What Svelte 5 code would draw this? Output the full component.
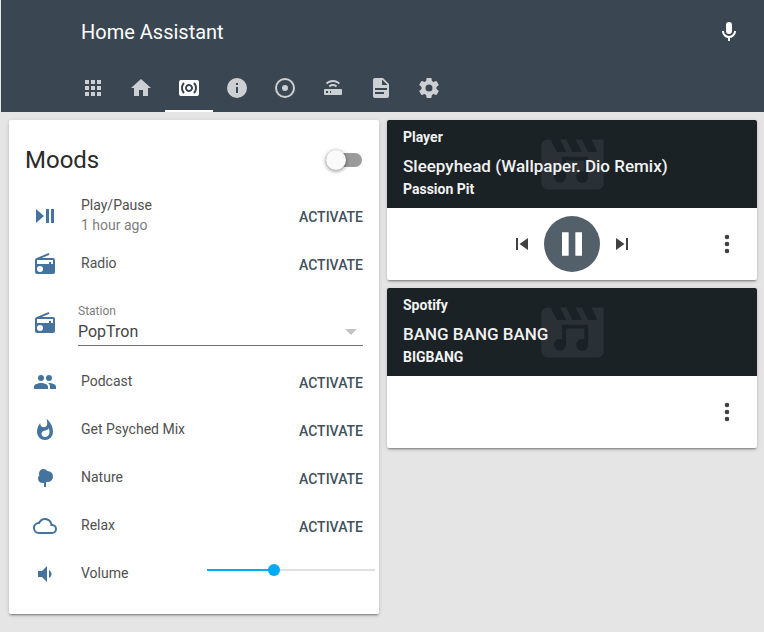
<script lang="ts">
	const icons = {
		apps: 'M4,8H8V4H4V8M10,20H14V16H10V20M4,20H8V16H4V20M4,14H8V10H4V14M10,14H14V10H10V14M16,4V8H20V4H16M10,8H14V4H10V8M16,14H20V10H16V14M16,20H20V16H16V20Z',
		home: 'M10,20V14H14V20H19V12H22L12,3L2,12H5V20H10Z',
		surround:
			'M20 4H4a2 2 0 0 0-2 2v12a2 2 0 0 0 2 2h16a2 2 0 0 0 2-2V6a2 2 0 0 0-2-2zM7.76 16.24l-1.41 1.41C4.78 16.1 4 14.05 4 12s.78-4.1 2.34-5.66l1.41 1.41C6.59 8.93 6 10.46 6 12s.59 3.07 1.76 4.24zM12 16c-2.21 0-4-1.79-4-4s1.79-4 4-4 4 1.79 4 4-1.79 4-4 4zm5.66 1.66l-1.41-1.41C17.41 15.07 18 13.54 18 12s-.59-3.07-1.76-4.24l1.41-1.41C19.22 7.9 20 9.95 20 12s-.78 4.1-2.34 5.66zM12 10c-1.1 0-2 .9-2 2s.9 2 2 2 2-.9 2-2-.9-2-2-2z',
		info: 'M13,9H11V7H13M13,17H11V11H13M12,2A10,10 0 0,0 2,12A10,10 0 0,0 12,22A10,10 0 0,0 22,12A10,10 0 0,0 12,2Z',
		record:
			'M12,20A8,8 0 0,1 4,12A8,8 0 0,1 12,4A8,8 0 0,1 20,12A8,8 0 0,1 12,20M12,2A10,10 0 0,0 2,12A10,10 0 0,0 12,22A10,10 0 0,0 22,12A10,10 0 0,0 12,2M12,9A3,3 0 0,0 9,12A3,3 0 0,0 12,15A3,3 0 0,0 15,12A3,3 0 0,0 12,9Z',
		router:
			'M4,13H20A1,1 0 0,1 21,14V18A1,1 0 0,1 20,19H4A1,1 0 0,1 3,18V14A1,1 0 0,1 4,13M9,17H10V15H9V17M5,15V17H7V15H5M19,6.93L17.6,8.34C16.15,6.89 14.15,6 11.93,6C9.7,6 7.7,6.89 6.25,8.34L4.84,6.93C6.66,5.12 9.17,4 11.93,4C14.69,4 17.2,5.12 19,6.93M16.2,9.76L14.77,11.17C14.05,10.45 13.05,10 11.93,10C10.81,10 9.8,10.45 9.08,11.17L7.67,9.76C8.75,8.67 10.25,8 11.93,8C13.6,8 15.11,8.67 16.2,9.76Z',
		file: 'M13,9H18.5L13,3.5V9M6,2H14L20,8V20A2,2 0 0,1 18,22H6C4.89,22 4,21.1 4,20V4C4,2.89 4.89,2 6,2M15,18V16H6V18H15M18,14V12H6V14H18Z',
		settings:
			'M12,15.5A3.5,3.5 0 0,1 8.5,12A3.5,3.5 0 0,1 12,8.5A3.5,3.5 0 0,1 15.5,12A3.5,3.5 0 0,1 12,15.5M19.43,12.97C19.47,12.65 19.5,12.33 19.5,12C19.5,11.67 19.47,11.34 19.43,11L21.54,9.37C21.73,9.22 21.78,8.95 21.66,8.73L19.66,5.27C19.54,5.05 19.27,4.96 19.05,5.05L16.56,6.05C16.04,5.66 15.5,5.32 14.87,5.07L14.5,2.42C14.46,2.18 14.25,2 14,2H10C9.75,2 9.54,2.18 9.5,2.42L9.13,5.07C8.5,5.32 7.96,5.66 7.44,6.05L4.95,5.05C4.73,4.96 4.46,5.05 4.34,5.27L2.34,8.73C2.21,8.95 2.27,9.22 2.46,9.37L4.57,11C4.53,11.34 4.5,11.67 4.5,12C4.5,12.33 4.53,12.65 4.57,12.97L2.46,14.63C2.27,14.78 2.21,15.05 2.34,15.27L4.34,18.73C4.46,18.95 4.73,19.03 4.95,18.95L7.44,17.94C7.96,18.34 8.5,18.68 9.13,18.93L9.5,21.58C9.54,21.82 9.75,22 10,22H14C14.25,22 14.46,21.82 14.5,21.58L14.87,18.93C15.5,18.67 16.04,18.34 16.56,17.94L19.05,18.95C19.27,19.03 19.54,18.95 19.66,18.73L21.66,15.27C21.78,15.05 21.73,14.78 21.54,14.63L19.43,12.97Z',
		mic: 'M12,2A3,3 0 0,1 15,5V11A3,3 0 0,1 12,14A3,3 0 0,1 9,11V5A3,3 0 0,1 12,2M19,11C19,14.53 16.39,17.44 13,17.93V21H11V17.93C7.61,17.44 5,14.53 5,11H7A5,5 0 0,0 12,16A5,5 0 0,0 17,11H19Z',
		playPause: 'M3,5V19L11,12M13,19H16V5H13M18,5V19H21V5',
		radio:
			'M20,6A2,2 0 0,1 22,8V20A2,2 0 0,1 20,22H4A2,2 0 0,1 2,20V8C2,7.15 2.53,6.42 3.28,6.13L15.71,1L16.47,2.83L8.83,6H20M20,8H4V12H16V10H18V12H20V8M7,14A3,3 0 0,0 4,17A3,3 0 0,0 7,20A3,3 0 0,0 10,17A3,3 0 0,0 7,14Z',
		people:
			'M16,13C15.71,13 15.38,13 15.03,13.05C16.19,13.89 17,15 17,16.5V19H23V16.5C23,14.17 18.33,13 16,13M8,13C5.67,13 1,14.17 1,16.5V19H15V16.5C15,14.17 10.33,13 8,13M8,11A3,3 0 0,0 11,8A3,3 0 0,0 8,5A3,3 0 0,0 5,8A3,3 0 0,0 8,11M16,11A3,3 0 0,0 19,8A3,3 0 0,0 16,5A3,3 0 0,0 13,8A3,3 0 0,0 16,11Z',
		fire: 'M11.71,19C9.93,19 8.5,17.59 8.5,15.86C8.5,14.24 9.53,13.1 11.3,12.74C13.07,12.38 14.9,11.53 15.92,10.16C16.31,11.45 16.5,12.81 16.5,14.2C16.5,16.85 14.36,19 11.71,19M13.5,0.67C13.5,0.67 14.24,3.32 14.24,5.47C14.24,7.53 12.89,9.2 10.83,9.2C8.76,9.2 7.2,7.53 7.2,5.47L7.23,5.1C5.21,7.5 4,10.61 4,14A8,8 0 0,0 12,22A8,8 0 0,0 20,14C20,8.6 17.41,3.8 13.5,0.67Z',
		tree: 'M11,21V16.74C10.53,16.91 10.03,17 9.5,17C7,17 5,15 5,12.5C5,11.23 5.5,10.09 6.36,9.27C6.13,8.73 6,8.13 6,7.5C6,5 8,3 10.5,3C12.06,3 13.44,3.8 14.25,5C14.33,5 14.41,5 14.5,5A5.5,5.5 0 0,1 20,10.5A5.5,5.5 0 0,1 14.5,16C14,16 13.5,15.93 13,15.79V21H11Z',
		cloud:
			'M19,18H6A4,4 0 0,1 2,14A4,4 0 0,1 6,10H6.71C7.37,7.69 9.5,6 12,6A5.5,5.5 0 0,1 17.5,11.5V12H19A3,3 0 0,1 22,15A3,3 0 0,1 19,18M19.35,10.03C18.67,6.59 15.64,4 12,4C9.11,4 6.6,5.64 5.35,8.03C2.34,8.36 0,10.9 0,14A6,6 0 0,0 6,20H19A5,5 0 0,0 24,15C24,12.36 21.95,10.22 19.35,10.03Z',
		volume: 'M5,9V15H9L14,20V4L9,9M18.5,12C18.5,10.23 17.5,8.71 16,7.97V16C17.5,15.29 18.5,13.76 18.5,12Z',
		prev: 'M6,18V6H8V18H6M9.5,12L18,6V18L9.5,12Z',
		next: 'M16,18H18V6H16M6,18L14.5,12L6,6V18Z',
		pause: 'M14,19H18V5H14M6,19H10V5H6V19Z',
		dots: 'M12,16A2,2 0 0,1 14,18A2,2 0 0,1 12,20A2,2 0 0,1 10,18A2,2 0 0,1 12,16M12,10A2,2 0 0,1 14,12A2,2 0 0,1 12,14A2,2 0 0,1 10,12A2,2 0 0,1 12,10M12,4A2,2 0 0,1 14,6A2,2 0 0,1 12,8A2,2 0 0,1 10,6A2,2 0 0,1 12,4Z',
		movie: 'M18,4L20,8H17L15,4H13L15,8H12L10,4H8L10,8H7L5,4H4A2,2 0 0,0 2,6V18A2,2 0 0,0 4,20H20A2,2 0 0,0 22,18V4H18Z',
		note: 'M8.7,9.5H17V16A1.9,1.9 0 1,1 15.8,14.2V10.7H9.9V16A1.9,1.9 0 1,1 8.7,14.2V9.5Z'
	};

	const tabs = ['apps', 'home', 'surround', 'info', 'record', 'router', 'file', 'settings'];
	const activeTab = 'surround';

	const topScenes = [
		{ icon: 'playPause', name: 'Play/Pause', sub: '1 hour ago' },
		{ icon: 'radio', name: 'Radio' }
	];
	const scenes = [
		{ icon: 'people', name: 'Podcast' },
		{ icon: 'fire', name: 'Get Psyched Mix' },
		{ icon: 'tree', name: 'Nature' },
		{ icon: 'cloud', name: 'Relax' }
	];

	const volume = 40;
</script>

{#snippet icon(name)}
	<svg class="icon" viewBox="0 0 24 24" aria-hidden="true"><path d={icons[name]} /></svg>
{/snippet}

{#snippet scene(item)}
	<div class="row">
		<span class="state-icon">{@render icon(item.icon)}</span>
		<div class="info">
			<div class="name">{item.name}</div>
			{#if item.sub}
				<div class="sub">{item.sub}</div>
			{/if}
		</div>
		<button class="activate">ACTIVATE</button>
	</div>
{/snippet}

{#snippet player(source, title, artist)}
	<div class="player-head">
		<svg class="watermark" viewBox="0 0 24 24" aria-hidden="true">
			<path d={icons.movie} />
			<path class="watermark-note" d={icons.note} />
		</svg>
		<div class="source">{source}</div>
		<div class="song">{title}</div>
		<div class="artist">{artist}</div>
	</div>
{/snippet}

<div class="page">
	<header class="toolbar">
		<div class="title-row">
			<div class="app-title">Home Assistant</div>
			<span class="mic">{@render icon('mic')}</span>
		</div>
		<nav class="tabs">
			{#each tabs as tab}
				<div class="tab" class:active={tab === activeTab}>{@render icon(tab)}</div>
			{/each}
		</nav>
	</header>

	<main class="columns">
		<section class="card moods">
			<div class="moods-head">
				<h1>Moods</h1>
				<div class="toggle"><span class="knob"></span></div>
			</div>

			{#each topScenes as item}
				{@render scene(item)}
			{/each}

			<div class="row select-row">
				<span class="state-icon">{@render icon('radio')}</span>
				<div class="select">
					<div class="select-label">Station</div>
					<div class="select-value">
						PopTron
						<span class="caret"></span>
					</div>
				</div>
			</div>

			{#each scenes as item}
				{@render scene(item)}
			{/each}

			<div class="row">
				<span class="state-icon">{@render icon('volume')}</span>
				<div class="info">
					<div class="name">Volume</div>
				</div>
				<div class="slider">
					<div class="slider-fill" style="width: {volume}%">
						<span class="slider-knob"></span>
					</div>
				</div>
			</div>
		</section>

		<div class="side">
			<section class="card">
				{@render player('Player', 'Sleepyhead (Wallpaper. Dio Remix)', 'Passion Pit')}
				<div class="controls">
					<span class="skip">{@render icon('prev')}</span>
					<span class="pause">{@render icon('pause')}</span>
					<span class="skip">{@render icon('next')}</span>
					<span class="more">{@render icon('dots')}</span>
				</div>
			</section>
			<section class="card">
				{@render player('Spotify', 'BANG BANG BANG', 'BIGBANG')}
				<div class="controls">
					<span class="more">{@render icon('dots')}</span>
				</div>
			</section>
		</div>
	</main>
</div>

<style>
	:global(body) {
		background: #e5e5e5;
		font-family: Roboto, 'Noto Sans', sans-serif;
	}

	.page {
		margin-left: 1px;
		height: 632px;
		overflow: hidden;
	}

	.icon {
		display: block;
		width: 24px;
		height: 24px;
		fill: currentColor;
	}

	.toolbar {
		background: #3a4651;
		color: #fff;
		height: 112px;
	}

	.title-row {
		height: 64px;
		display: flex;
		align-items: center;
		justify-content: space-between;
		padding: 0 23px 0 80px;
	}

	.app-title {
		font-size: 20px;
	}

	.tabs {
		display: flex;
		height: 48px;
		padding-left: 68px;
	}

	.tab {
		width: 48px;
		display: flex;
		align-items: center;
		justify-content: center;
		color: rgba(255, 255, 255, 0.75);
	}

	.tab.active {
		color: #fff;
		box-shadow: inset 0 -2px 0 #fff;
	}

	.columns {
		display: grid;
		grid-template-columns: 370px 370px;
		gap: 8px;
		padding: 8px;
		align-items: start;
	}

	.side {
		display: flex;
		flex-direction: column;
		gap: 8px;
	}

	.card {
		background: #fff;
		border-radius: 2px;
		box-shadow:
			0 2px 2px rgba(0, 0, 0, 0.14),
			0 1px 5px rgba(0, 0, 0, 0.12),
			0 3px 1px -2px rgba(0, 0, 0, 0.2);
		overflow: hidden;
	}

	.moods {
		padding: 0 16px 16px;
		overflow: visible;
	}

	.moods-head {
		height: 72px;
		display: flex;
		align-items: center;
		justify-content: space-between;
		padding-top: 8px;
		box-sizing: border-box;
	}

	h1 {
		margin: 0;
		font-size: 24px;
		font-weight: 400;
		color: #2b2b2b;
	}

	.toggle {
		position: relative;
		width: 36px;
		height: 14px;
		border-radius: 7px;
		background: #9b9b9b;
		margin-right: 1px;
	}

	.knob {
		position: absolute;
		left: 0;
		top: -3px;
		width: 20px;
		height: 20px;
		border-radius: 50%;
		background: #fafafa;
		box-shadow: 0 1px 4px rgba(0, 0, 0, 0.5);
	}

	.row {
		height: 48px;
		display: flex;
		align-items: center;
	}

	.state-icon {
		width: 40px;
		display: flex;
		justify-content: center;
		color: #44739e;
		flex: none;
	}

	.info {
		flex: 1;
		margin-left: 16px;
		padding-bottom: 2px;
		font-size: 14px;
		line-height: 20px;
		color: #505050;
	}

	.sub {
		color: #7d7d7d;
	}

	.activate {
		border: 0;
		background: none;
		padding: 2px 0 0;
		font: 500 14px Roboto, sans-serif;
		color: #42505b;
	}

	.select-row {
		height: 70px;
	}

	.select {
		flex: 1;
		margin-left: 13px;
		margin-top: 2px;
	}

	.select-label {
		font-size: 12px;
		line-height: 16px;
		color: #7d7d7d;
	}

	.select-value {
		display: flex;
		align-items: center;
		justify-content: space-between;
		height: 26px;
		border-bottom: 1px solid #737373;
		font-size: 16px;
		color: #444;
	}

	.caret {
		width: 0;
		height: 0;
		border-left: 6px solid transparent;
		border-right: 6px solid transparent;
		border-top: 6px solid #c4c4c4;
		margin-right: 6px;
	}

	.slider {
		position: relative;
		width: 168px;
		height: 2px;
		margin: 0 -12px 8px 0;
		background: #e0e0e0;
	}

	.slider-fill {
		position: relative;
		height: 2px;
		background: #03a9f4;
	}

	.slider-knob {
		position: absolute;
		right: -6px;
		top: -5px;
		width: 12px;
		height: 12px;
		border-radius: 50%;
		background: #03a9f4;
	}

	.player-head {
		position: relative;
		height: 88px;
		box-sizing: border-box;
		padding: 8px 16px 0;
		background: #1b2226;
		color: #f2f2f2;
	}

	.watermark {
		position: absolute;
		left: 147.5px;
		top: 6.5px;
		width: 75px;
		height: 75px;
		fill: #2a3035;
	}

	.watermark-note {
		fill: #1b2226;
	}

	.source,
	.song,
	.artist {
		position: relative;
	}

	.source {
		font-size: 14px;
		font-weight: 700;
		line-height: 18px;
	}

	.song {
		margin-top: 9px;
		font-size: 17px;
		font-weight: 500;
		line-height: 22px;
	}

	.artist {
		margin-top: 2px;
		font-size: 14px;
		font-weight: 700;
		line-height: 20px;
	}

	.controls {
		position: relative;
		height: 72px;
		display: flex;
		align-items: center;
		justify-content: center;
		gap: 10px;
	}

	.skip {
		width: 24px;
		color: #424242;
		display: flex;
		justify-content: center;
	}

	.pause {
		width: 56px;
		height: 56px;
		border-radius: 50%;
		background: #546069;
		color: #fff;
		display: flex;
		align-items: center;
		justify-content: center;
	}

	.pause .icon {
		width: 40px;
		height: 40px;
	}

	.more {
		position: absolute;
		right: 16px;
		top: 22px;
		color: #424242;
	}

	.more .icon {
		width: 28px;
		height: 28px;
	}
</style>
